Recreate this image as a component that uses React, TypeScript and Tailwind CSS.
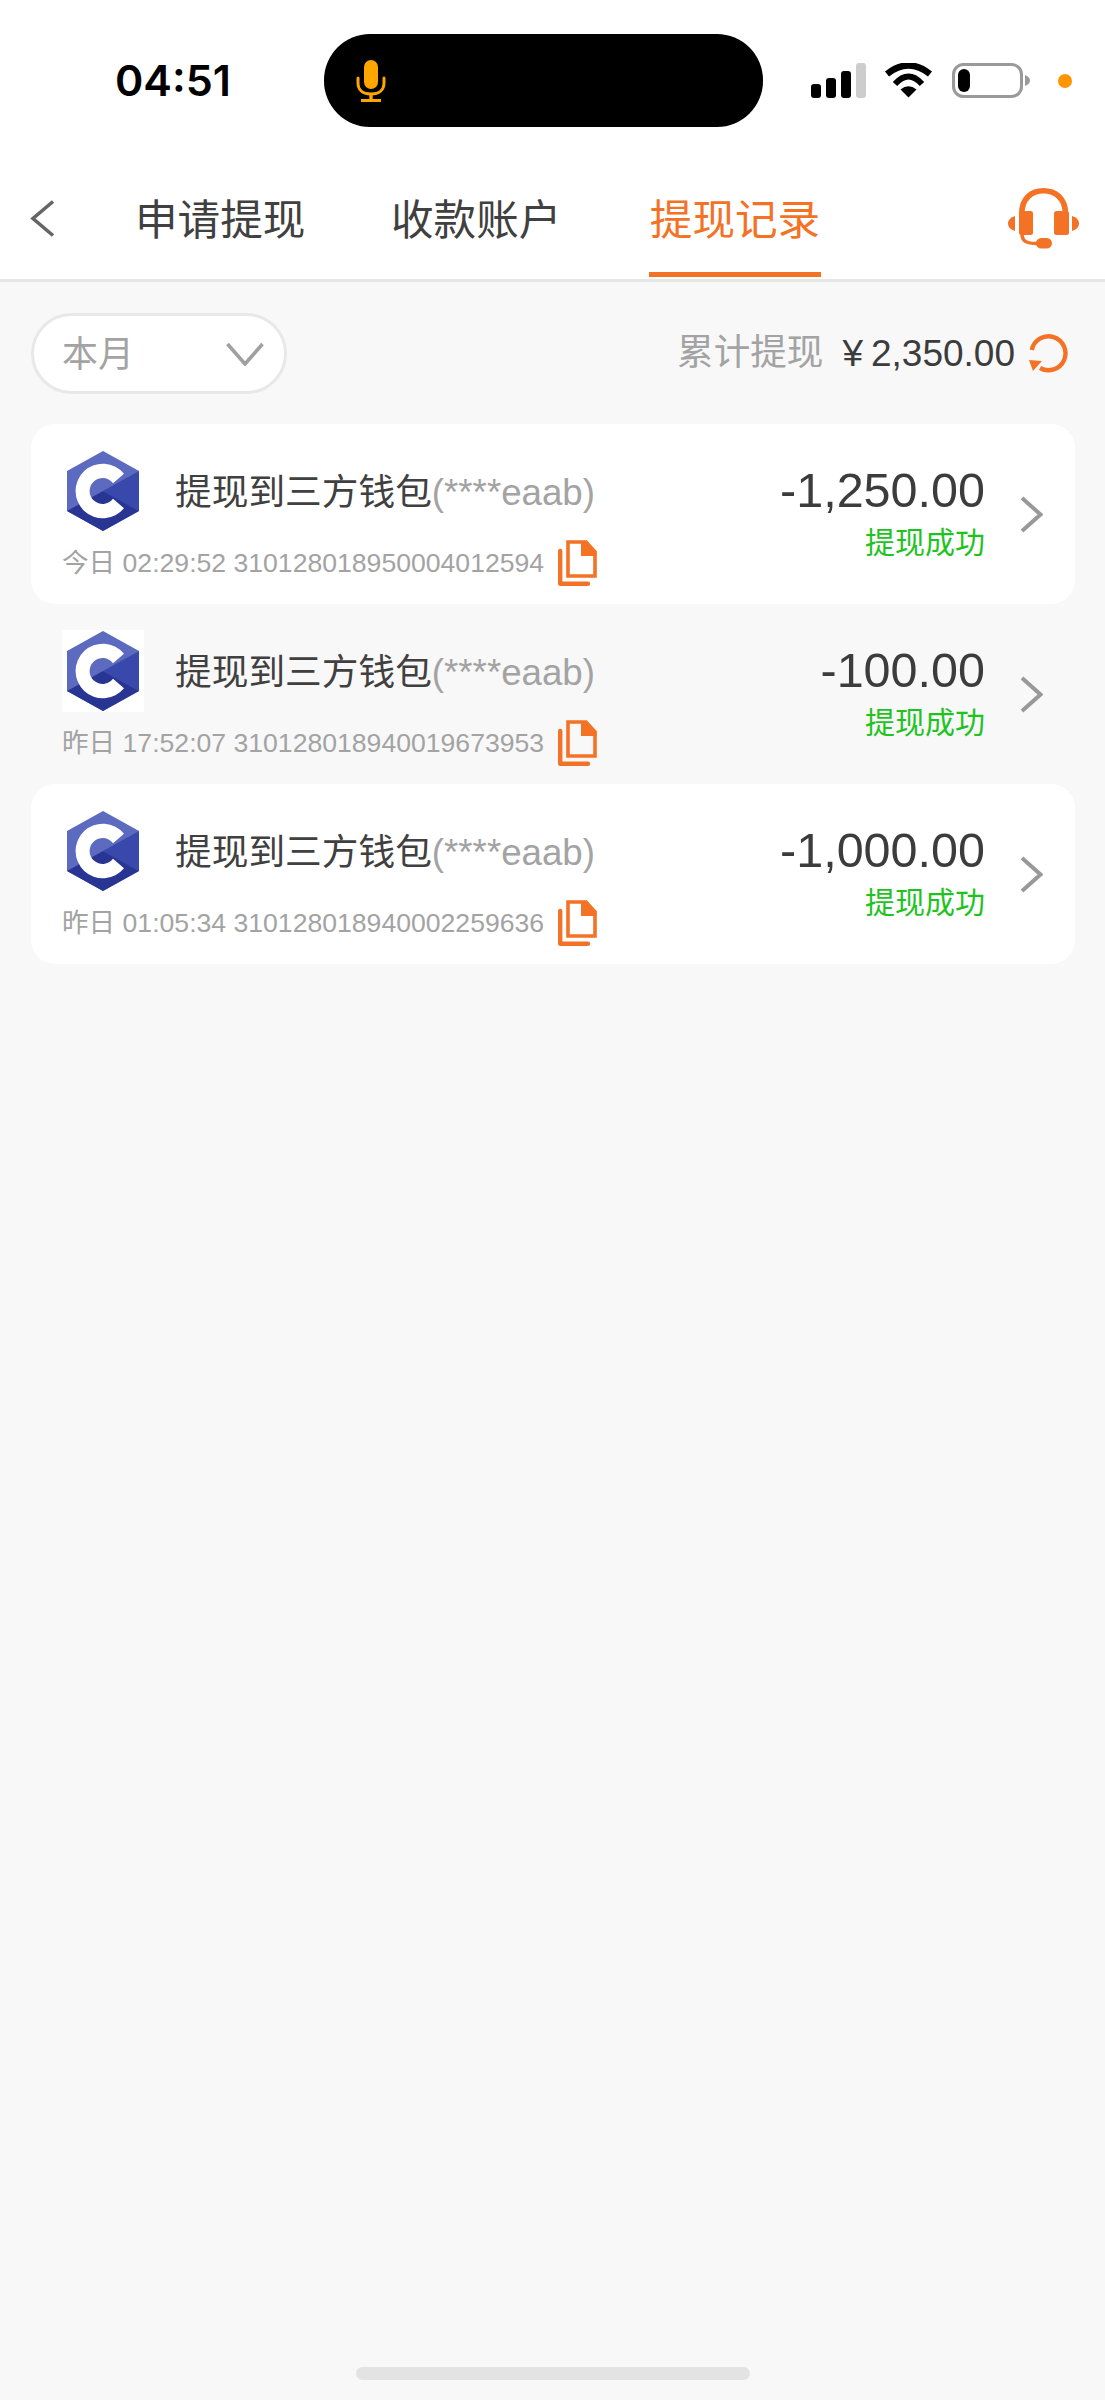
const records = [
  { when: '今日 02:29:52', no: '310128018950004012594', amount: '-1,250.00', white: true },
  { when: '昨日 17:52:07', no: '310128018940019673953', amount: '-100.00', white: false },
  { when: '昨日 01:05:34', no: '310128018940002259636', amount: '-1,000.00', white: true },
]

function Mic() {
  return (
    <svg width="30" height="42" viewBox="0 0 30 42" fill="none" stroke="#ffa500" className="ml-[32px]">
      <rect x="8" y="0" width="14" height="29" rx="7" fill="#ffa500" stroke="none" />
      <path d="M2 18 V23 C2 30 7 34 15 34 C23 34 28 30 28 23 V18" strokeWidth="3" strokeLinecap="round" />
      <path d="M15 34 V40" strokeWidth="3.4" />
      <path d="M5 40.5 H25" strokeWidth="3" />
    </svg>
  )
}

function Signal() {
  return (
    <svg width="55" height="35" viewBox="0 0 55 35" className="ml-[48px]">
      <rect x="0" y="21" width="10" height="14" rx="3" fill="#000" />
      <rect x="15" y="15" width="10" height="20" rx="3" fill="#000" />
      <rect x="30" y="8" width="10" height="27" rx="3" fill="#000" />
      <rect x="45" y="0" width="10" height="35" rx="3" fill="#cdcdcd" />
    </svg>
  )
}

function Wifi() {
  return (
    <svg width="49" height="35" viewBox="0 0 49 35" fill="none" stroke="#000" className="ml-[18px]">
      <path d="M3 11 Q24.5 -6 46 11" strokeWidth="6.5" />
      <path d="M11 21 Q24.5 6 38 21" strokeWidth="6" />
      <path d="M16.5 26.5 Q24.5 20 32.5 26.5 L24.5 34.5 Z" fill="#000" stroke="none" />
    </svg>
  )
}

function Battery() {
  return (
    <svg width="78" height="35" viewBox="0 0 78 35" fill="none" className="ml-[19px]">
      <rect x="1.5" y="1.5" width="68" height="32" rx="10" stroke="#9a9a9a" strokeWidth="3" />
      <rect x="6" y="6" width="12" height="23" rx="6" fill="#000" />
      <path d="M73 12 C76 13 78 15 78 17.5 C78 20 76 22 73 23 Z" fill="#9a9a9a" />
    </svg>
  )
}

function Headset() {
  return (
    <svg width="71" height="61" viewBox="0 0 71 61" fill="none" className="ml-auto mr-[26px] mt-[61px] self-start">
      <path d="M13.7 26 C13.7 10 24 2.8 35.5 2.8 C47 2.8 57.5 10 57.5 26" stroke="#f47225" strokeWidth="5.6" />
      <rect x="11" y="23" width="14" height="24" rx="2.5" fill="#f47225" />
      <rect x="46" y="23" width="15" height="24" rx="2.5" fill="#f47225" />
      <path d="M7 28 Q0 30 0 35.5 Q0 41 7 43 Z" fill="#f47225" />
      <path d="M64 28 Q71 30 71 35.5 Q71 41 64 43 Z" fill="#f47225" />
      <path d="M14 46 C14 53 18 55.5 29 55.5" stroke="#f47225" strokeWidth="3.5" />
      <rect x="28" y="50" width="16" height="10.5" rx="5.2" fill="#f47225" />
    </svg>
  )
}

// hexagon badge with the white C on top
function WalletLogo() {
  return (
    <svg width="72" height="80" viewBox="0 0 72 80">
      <polygon points="36,0 72,20 72,60 36,80 0,60 0,20" fill="#5c6bc0" />
      <polygon points="36,40 72,20 72,60" fill="#3949ab" />
      <polygon points="0,60 36,40 72,60 36,80" fill="#283593" />
      <path d="M57 22.7 A27.3 27.3 0 1 0 57 57.3 L46 47.8 A13 13 0 1 1 46 32.2 Z" fill="#fff" />
    </svg>
  )
}

function CopyIcon() {
  return (
    <svg width="39" height="46" viewBox="0 0 39 46" fill="none" stroke="#f47225" className="ml-[14px] shrink-0">
      <path d="M2.2 11 V43.8 H30" strokeWidth="4.4" strokeLinecap="round" strokeLinejoin="round" />
      <path d="M10 2 H28 L37 12 V36 H10 Z" strokeWidth="3.6" />
      <polygon points="23,1 28.5,1 38.5,11 38.5,16 23,16" fill="#f47225" stroke="none" />
    </svg>
  )
}

function Refresh() {
  return (
    <svg width="39" height="39" viewBox="0 0 39 39" fill="none" className="ml-[14px]">
      <path d="M2.8 16 A17 17 0 1 1 11 34" stroke="#f47225" strokeWidth="4.4" />
      <polygon points="0,26 13,27 4,37" fill="#f47225" />
    </svg>
  )
}

export default function App() {
  return (
    <div className="min-h-[2400px] bg-[#f8f8f8] font-['Liberation_Sans','Noto_Sans_CJK_SC',sans-serif]">
      {/* status bar + tabs */}
      <div className="bg-white border-b-[3px] border-[#e6e6e6]">
        <div className="flex items-center pt-[34px] pl-[115px]">
          <div className="w-[209px] text-[43px] leading-[93px] font-semibold text-black font-['Inter',sans-serif]">04:51</div>
          <div className="flex h-[93px] w-[439px] items-center rounded-[46px] bg-black">
            <Mic />
          </div>
          <Signal />
          <Wifi />
          <Battery />
          <div className="ml-[28px] size-[14px] rounded-full bg-[#ff9500]" />
        </div>

        <div className="flex h-[152px] pb-[2px] pl-[30px]">
          <svg width="25" height="37" viewBox="0 0 25 37" fill="none" className="mt-[73px]">
            <path d="M23 1.5 L3 18.5 L23 35.5" stroke="#666" strokeWidth="3.6" />
          </svg>
          <div className="ml-[80px] w-[172px] border-b-[5px] border-transparent pt-[69px] text-[42.6px] leading-[48px] whitespace-nowrap text-[#404040]">申请提现</div>
          <div className="ml-[84px] w-[172px] border-b-[5px] border-transparent pt-[69px] text-[42.6px] leading-[48px] whitespace-nowrap text-[#404040]">收款账户</div>
          <div className="ml-[86px] w-[172px] border-b-[5px] border-[#f47225] pt-[69px] text-center text-[42.6px] leading-[48px] whitespace-nowrap text-[#f47225]">提现记录</div>
          <Headset />
        </div>
      </div>

      {/* month filter + running total */}
      <div className="flex items-center justify-between pl-[31px] pr-[37px] pt-[31px]">
        <div className="flex h-[81px] w-[256px] items-center justify-between rounded-[41px] border-[3px] border-[#e8e8e8] bg-white pl-[28px] pr-[20px]">
          <span className="pt-[2px] text-[36px] text-[#a3a3a3]">本月</span>
          <svg width="38" height="24" viewBox="0 0 38 24" fill="none">
            <path d="M1.5 2 L19 22 L36.5 2" stroke="#a0a0a0" strokeWidth="3.6" />
          </svg>
        </div>
        <div className="flex items-center">
          <span className="text-[36.6px] text-[#a3a3a3]">累计提现</span>
          <span className="ml-[19px] text-[37px] text-[#3c3c3c]">¥</span>
          <span className="ml-[8px] text-[37px] text-[#3c3c3c]">2,350.00</span>
          <Refresh />
        </div>
      </div>

      <div className="ml-[31px] mr-[30px] mt-[30px]">
        {records.map(r => (
          <div key={r.no} className={`flex h-[180px] rounded-[24px] pl-[31px] pr-[32px] ${r.white ? 'bg-white' : ''}`}>
            <div className="flex-1 pt-[26px]">
              <div className="flex items-center">
                <div className="flex size-[82px] shrink-0 items-center justify-center bg-white">
                  <WalletLogo />
                </div>
                <span className="ml-[31px] pt-[3px] text-[36.7px] whitespace-nowrap text-[#404040]">提现到三方钱包<span className="text-[#a3a3a3]">(****eaab)</span></span>
              </div>
              <div className="mt-[8px] flex h-[46px] items-center">
                <span className="pt-[2px] text-[26.6px] whitespace-nowrap text-[#a3a3a3]">{r.when} {r.no}</span>
                <CopyIcon />
              </div>
            </div>
            <div className="pt-[38px] text-right">
              <div className="text-[48.5px] leading-[56px] text-[#3c3c3c]">{r.amount}</div>
              <div className="mt-[5px] text-[30px] leading-[40px] text-[#1fc31f]">提现成功</div>
            </div>
            <div className="ml-[35px] flex items-center">
              <svg width="23" height="37" viewBox="0 0 23 37" fill="none">
                <path d="M2 2 L20.5 18.5 L2 35" stroke="#999" strokeWidth="4" />
              </svg>
            </div>
          </div>
        ))}
      </div>

      {/* home indicator */}
      <div className="fixed bottom-[20px] left-[356px] h-[13px] w-[394px] rounded-full bg-[#e3e3e3]" />
    </div>
  )
}
